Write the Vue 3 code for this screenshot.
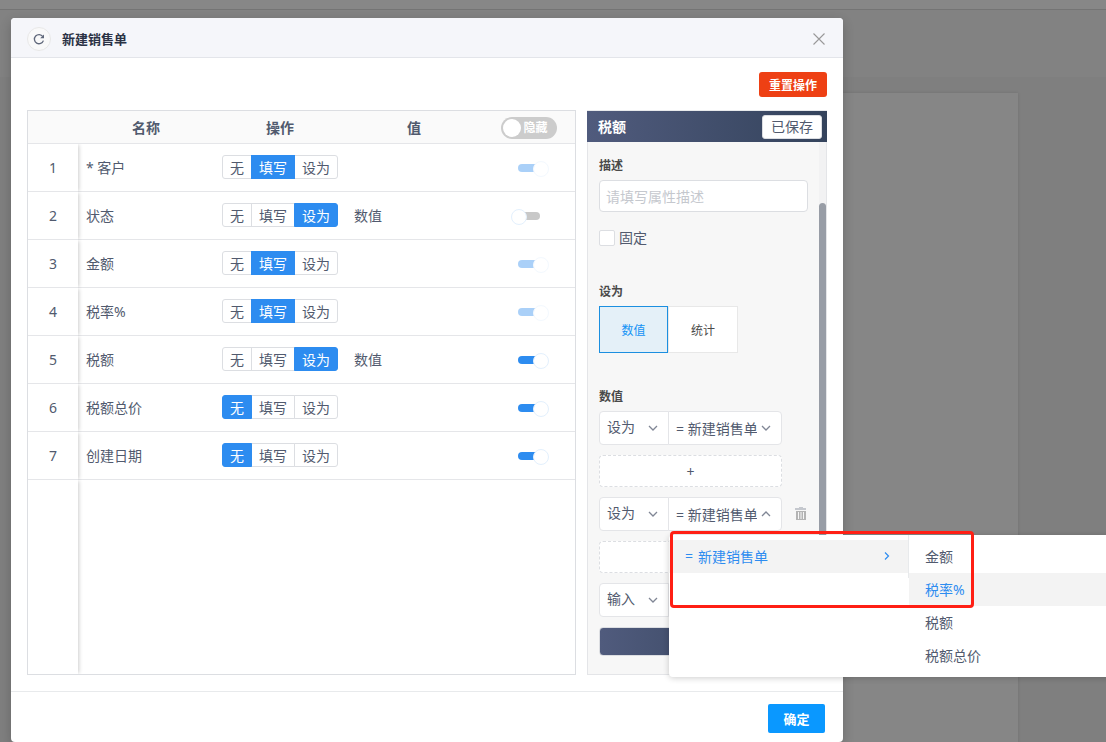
<script setup>
import { ref } from 'vue'

const actions = ['无', '填写', '设为']

const rows = ref([
  { name: '* 客户', action: '填写', value: '', visible: true, locked: true },
  { name: '状态', action: '设为', value: '数值', visible: false, locked: false },
  { name: '金额', action: '填写', value: '', visible: true, locked: true },
  { name: '税率%', action: '填写', value: '', visible: true, locked: true },
  { name: '税额', action: '设为', value: '数值', visible: true, locked: false },
  { name: '税额总价', action: '无', value: '', visible: true, locked: false },
  { name: '创建日期', action: '无', value: '', visible: true, locked: false },
])

const showAll = ref(false)
const description = ref('')
const pinned = ref(false)
const mode = ref('数值')
const menuItems = ['金额', '税率%', '税额', '税额总价']
const activeItem = ref('税率%')
</script>

<template>
  <div class="screen">
    <div class="backdrop" aria-hidden="true">
      <div class="backdrop-bar"></div>
      <div class="backdrop-strip"></div>
      <div class="backdrop-sheet"></div>
    </div>

    <section class="modal" role="dialog" aria-labelledby="modal-title">
      <header class="modal-head">
        <button class="refresh" type="button" aria-label="刷新">
          <svg viewBox="0 0 12 12" width="12" height="12">
            <path d="M10.4 7.6A4.600 4.600 0 1 1 9.800 3.500" fill="none" stroke="#5f677a" stroke-width="1.3" />
            <path d="M11 1.500V5.200H7.200z" fill="#5f677a" />
          </svg>
        </button>
        <h1 id="modal-title">新建销售单</h1>
        <button class="close" type="button" aria-label="关闭">
          <svg viewBox="0 0 12 12" width="12" height="12">
            <path d="M.5 .5l11 11M11.5 .5l-11 11" fill="none" stroke="#999" stroke-width="1.1" />
          </svg>
        </button>
      </header>

      <div class="modal-body">
        <div class="toolbar">
          <button class="reset" type="button">重置操作</button>
        </div>

        <div class="columns">
          <div class="table-box">
            <table>
              <colgroup>
                <col class="c-index" />
                <col class="c-name" />
                <col class="c-action" />
                <col class="c-value" />
                <col class="c-visible" />
              </colgroup>
              <thead>
                <tr>
                  <th class="index"></th>
                  <th>名称</th>
                  <th>操作</th>
                  <th>值</th>
                  <th>
                    <label class="big-switch">
                      <input v-model="showAll" type="checkbox" role="switch" />
                      <span class="big-knob"></span>
                      <span>隐藏</span>
                    </label>
                  </th>
                </tr>
              </thead>
              <tbody>
                <tr v-for="(row, i) in rows" :key="row.name">
                  <td class="index">{{ i + 1 }}</td>
                  <td>{{ row.name }}</td>
                  <td class="action">
                    <div class="group" role="radiogroup" :aria-label="row.name">
                      <label v-for="a in actions" :key="a" :class="{ on: row.action === a }">
                        <input v-model="row.action" type="radio" :name="'action-' + i" :value="a" />{{ a }}
                      </label>
                    </div>
                  </td>
                  <td>{{ row.value }}</td>
                  <td class="visible">
                    <input
                      v-model="row.visible"
                      class="switch"
                      type="checkbox"
                      role="switch"
                      :disabled="row.locked"
                      :aria-label="row.name"
                    />
                  </td>
                </tr>
              </tbody>
            </table>
            <div class="index-tail"></div>
          </div>

          <aside class="panel">
            <div class="panel-head">
              <h2>税额</h2>
              <button type="button">已保存</button>
            </div>
            <div class="panel-body">
              <div class="form">
                <label class="caption" for="description">描述</label>
                <input id="description" v-model="description" class="text" type="text" placeholder="请填写属性描述" />
                <label class="check"><input v-model="pinned" type="checkbox" />固定</label>

                <div class="caption">设为</div>
                <div class="tabs">
                  <button
                    v-for="m in ['数值', '统计']"
                    :key="m"
                    type="button"
                    :class="{ on: mode === m }"
                    @click="mode = m"
                  >{{ m }}</button>
                </div>

                <div class="caption">数值</div>
                <div class="steps">
                  <div class="pair">
                    <div class="pick small">
                      <select aria-label="方式一"><option>设为</option></select>
                      <svg viewBox="0 0 10 10"><path d="M1 3l4 4 4-4" /></svg>
                    </div>
                    <div class="pick">
                      <select aria-label="来源一"><option>= 新建销售单</option></select>
                      <svg viewBox="0 0 10 10"><path d="M1 3l4 4 4-4" /></svg>
                    </div>
                  </div>
                  <button class="add" type="button">+</button>
                  <div class="pair">
                    <div class="pick small">
                      <select aria-label="方式二"><option>设为</option></select>
                      <svg viewBox="0 0 10 10"><path d="M1 3l4 4 4-4" /></svg>
                    </div>
                    <div class="pick">
                      <select aria-label="来源二"><option>= 新建销售单</option></select>
                      <svg viewBox="0 0 10 10"><path d="M1 7l4-4 4 4" /></svg>
                      <div class="cascade">
                        <ul class="cascade-root">
                          <li>
                            <button type="button" class="on">
                              <span>=</span>
                              <span class="source">新建销售单</span>
                              <svg viewBox="0 0 8 8" width="8" height="8"><path d="M2 .5L5.5 4 2 7.500" /></svg>
                            </button>
                          </li>
                        </ul>
                        <ul class="cascade-sub">
                          <li v-for="item in menuItems" :key="item">
                            <button type="button" :class="{ on: item === activeItem }" @click="activeItem = item">{{ item }}</button>
                          </li>
                        </ul>
                        <div class="marker"></div>
                      </div>
                    </div>
                    <button class="trash" type="button" aria-label="删除">
                      <svg viewBox="0 0 12 14" width="12" height="14">
                        <path d="M4 0h4v1h3v2H0V1h4z" fill="#c5c8ce" />
                        <path d="M1 4h10v9H1z" fill="#b4b4b4" />
                        <path d="M3.500 5v7M6 5v7M8.500 5v7" stroke="#f7f7f7" stroke-width="1" />
                      </svg>
                    </button>
                  </div>
                  <button class="add" type="button" aria-label="添加"></button>
                  <div class="pair">
                    <div class="pick small">
                      <select aria-label="方式三"><option>输入</option></select>
                      <svg viewBox="0 0 10 10"><path d="M1 3l4 4 4-4" /></svg>
                    </div>
                    <div class="pick">
                      <select aria-label="来源三"><option></option></select>
                    </div>
                  </div>
                  <button class="apply" type="button" aria-label="保存"></button>
                </div>
              </div>
              <div class="scroll"><div class="thumb"></div></div>
            </div>
          </aside>
        </div>
      </div>

      <footer class="modal-foot">
        <button type="button">确定</button>
      </footer>
    </section>
  </div>
</template>

<style>
body {
  margin: 0;
  background: #7f7f7f;
}
</style>

<style scoped>
* {
  box-sizing: border-box;
}
.screen,
.screen button,
.screen input,
.screen select {
  font-family: "Noto Sans", "Noto Sans CJK SC", sans-serif;
  font-size: 14px;
  color: #515a6e;
}
.screen {
  position: relative;
  display: flex;
  min-height: 100vh;
  padding: 18px 263px 0 11px;
  overflow: hidden;
  line-height: 20px;
}
button {
  margin: 0;
  padding: 0;
  border: 0;
  background: none;
  cursor: pointer;
}
h1,
h2,
ul {
  margin: 0;
  padding: 0;
}
li {
  list-style: none;
}

.backdrop {
  position: absolute;
  inset: 0;
  display: flex;
  flex-direction: column;
  background: #7f7f7f;
}
.backdrop-bar {
  height: 10px;
  background: #878787;
  border-bottom: 1px solid #747474;
}
.backdrop-strip {
  height: 83px;
  background: linear-gradient(#828282 67px, #7f7f7f 67px);
}
.backdrop-sheet {
  flex: 1;
  margin: 0 88px 0 20px;
  background: #868686;
  box-shadow: 0 0 3px rgba(0, 0, 0, 0.12);
}

.modal {
  position: relative;
  flex: 1;
  display: flex;
  flex-direction: column;
  background: #fff;
  border-radius: 4px;
  box-shadow: 0 4px 12px rgba(0, 0, 0, 0.2);
}
.modal-head {
  display: flex;
  align-items: center;
  height: 40px;
  padding: 2px 16px 0;
  background: #f5f6fa;
  border-bottom: 1px solid #e3e5ea;
  border-radius: 4px 4px 0 0;
}
.refresh {
  display: grid;
  place-items: center;
  width: 24px;
  height: 24px;
  background: #f9f9f9;
  border: 1px solid #e8e8e8;
  border-radius: 50%;
}
.modal-head h1 {
  flex: 1;
  margin-left: 11px;
  font-size: 13px;
  color: #2b3245;
}
.close {
  display: grid;
  place-items: center;
  width: 16px;
  height: 16px;
}

.modal-body {
  flex: 1;
  display: flex;
  flex-direction: column;
  padding: 14px 16px 16px;
}
.toolbar {
  display: flex;
  justify-content: flex-end;
  margin-bottom: 13px;
}
.screen .reset {
  height: 25px;
  padding: 0 10px;
  background: #ee4014;
  border-radius: 3px;
  font-size: 12px;
  font-weight: bold;
  color: #fff;
}
.columns {
  flex: 1;
  display: flex;
  gap: 11px;
}

.table-box {
  flex: 1;
  display: flex;
  flex-direction: column;
  border: 1px solid #dcdee2;
}
table {
  width: 100%;
  table-layout: fixed;
  border-collapse: separate;
  border-spacing: 0;
}
.c-index {
  width: 50px;
}
.c-name,
.c-value {
  width: 136px;
}
.c-action {
  width: 132px;
}
.c-visible {
  width: 93px;
}
th {
  height: 33px;
  padding: 2px 0 0;
  background: #fafafa;
  border-bottom: 1px solid #e5e6e9;
}
th.index {
  box-shadow: 1px 0 #fff;
}
td {
  height: 48px;
  padding: 0 8px;
  border-bottom: 1px solid #e5e6e9;
}
td.index {
  text-align: center;
}
td.index,
.index-tail {
  box-shadow: 2px 0 4px -1px rgba(0, 0, 0, 0.2);
  clip-path: inset(0 -8px 0 0);
}
.index-tail {
  flex: 1;
  width: 50px;
}
td.action {
  padding-bottom: 2px;
}
td.visible {
  padding: 0 0 2px;
  text-align: center;
}

.big-switch {
  display: inline-flex;
  align-items: center;
  gap: 3px;
  width: 56px;
  height: 22px;
  padding: 0 2px;
  border-radius: 11px;
  background: #ccc;
  font-size: 12px;
  color: #fff;
  vertical-align: middle;
}
.big-switch input,
.group input {
  position: absolute;
  opacity: 0;
  pointer-events: none;
}
.big-knob {
  width: 18px;
  height: 18px;
  border-radius: 50%;
  background: #fff;
}

.switch {
  appearance: none;
  position: relative;
  display: inline-block;
  width: 22px;
  height: 8px;
  margin: 0;
  border-radius: 4px;
  background: #c8c8c8;
  vertical-align: middle;
}
.switch::after {
  content: "";
  position: absolute;
  top: -3px;
  left: -7px;
  width: 14px;
  height: 14px;
  border: 1px solid #e3f0fd;
  border-radius: 50%;
  background: #fff;
}
.switch:checked {
  background: #2d8cf0;
}
.switch:checked::after {
  left: 15px;
}
.switch:disabled {
  opacity: 0.4;
}

.group {
  display: flex;
  width: max-content;
}
.group label {
  height: 24px;
  margin-left: -1px;
  padding: 0 7px;
  border: 1px solid #dcdee2;
  line-height: 24px;
  background: #fff;
}
.group label:first-child {
  margin-left: 0;
  border-radius: 3px 0 0 3px;
}
.group label:last-child {
  border-radius: 0 3px 3px 0;
}
.group label.on {
  z-index: 1;
  background: #2d8cf0;
  border-color: #2d8cf0;
  color: #fff;
}

.panel {
  width: 240px;
  display: flex;
  flex-direction: column;
  border-top: 1px solid #e8eaec;
}
.panel-head {
  display: flex;
  align-items: center;
  justify-content: space-between;
  height: 31px;
  padding: 0 5px 0 11px;
  background: linear-gradient(90deg, #505b7d, #34435c);
}
.panel-head h2 {
  font-size: 14px;
  color: #fff;
}
.panel-head button {
  width: 60px;
  height: 24px;
  padding-bottom: 2px;
  background: #fff;
  border: 1px solid #dcdee2;
  border-radius: 3px;
}
.panel-body {
  flex: 1;
  display: flex;
  justify-content: space-between;
  background: #f7f7f7;
  border: 1px solid #e4e5e8;
  border-top: 0;
}
.form {
  display: flex;
  flex-direction: column;
  width: 220px;
  padding: 14px 0 18px 11px;
}
.caption {
  height: 24px;
  font-size: 12px;
  font-weight: bold;
  line-height: 20px;
  color: #4a4a4a;
}
.screen .text {
  width: 209px;
  height: 32px;
  padding: 0 6px;
  border: 1px solid #dcdee2;
  border-radius: 4px;
  background: #fff;
}
.text::placeholder {
  color: #c5c8ce;
  opacity: 1;
}
.check {
  display: flex;
  align-items: center;
  gap: 4px;
  height: 20px;
  margin: 16px 0 34px;
}
.check input {
  appearance: none;
  width: 16px;
  height: 16px;
  margin: 0;
  border: 1px solid #dcdee2;
  border-radius: 2px;
  background: #fff;
}
.tabs {
  display: flex;
  margin-bottom: 34px;
}
.screen .tabs button {
  width: 70px;
  height: 47px;
  background: #fff;
  border: 1px solid #e8e8e8;
  font-size: 12px;
  color: #4a4a4a;
}
.screen .tabs button.on {
  width: 69px;
  background: #e4f0f8;
  border-color: #1b8fe0;
  color: #1593f5;
}
.steps {
  display: flex;
  flex-direction: column;
  gap: 10px;
}
.pair {
  display: flex;
  align-items: center;
}
.pick {
  position: relative;
  display: grid;
  align-items: center;
  width: 114px;
  margin-left: -1px;
}
.pick.small {
  width: 70px;
  margin-left: 0;
}
.pick > select,
.pick > svg {
  grid-area: 1 / 1;
}
.pick > svg {
  justify-self: end;
  width: 10px;
  height: 10px;
  margin-right: 11px;
  fill: none;
  stroke: #808695;
  stroke-width: 1.3;
  pointer-events: none;
}
.pick > select {
  appearance: none;
  width: 100%;
  height: 34px;
  padding: 0 24px 0 7px;
  border: 1px solid #e4e5e8;
  border-radius: 0 4px 4px 0;
  background: #fff;
  text-overflow: clip;
}
.pick.small > select {
  padding-bottom: 3px;
  border-radius: 4px 0 0 4px;
}
.add {
  width: 183px;
  height: 32px;
  background: #fff;
  border: 1px dashed #dcdee2;
  border-radius: 4px;
}
.trash {
  display: grid;
  margin-left: 13px;
}
.apply {
  width: 183px;
  height: 29px;
  border: 1px solid #dcdee2;
  border-radius: 4px;
  background: linear-gradient(90deg, #505b7d, #34435c);
}
.scroll {
  width: 7px;
  padding-top: 61px;
  background: #f2f2f3;
}
.thumb {
  height: 340px;
  border-radius: 4px;
  background: #989da6;
}

.cascade {
  position: absolute;
  z-index: 10;
  top: 38px;
  left: 1px;
  display: flex;
  width: 480px;
  background: #fff;
  border-radius: 4px;
  box-shadow: 0 1px 6px rgba(0, 0, 0, 0.2);
}
.cascade ul {
  padding: 5px 0;
}
.cascade-root {
  width: 240px;
  height: 43px;
  border-right: 1px solid #e8eaec;
}
.cascade-sub {
  flex: 1;
}
.cascade button {
  display: flex;
  align-items: center;
  gap: 5px;
  width: 100%;
  height: 33px;
  padding: 0 17px 2px 16px;
}
.cascade button.on {
  background: #f3f3f3;
  color: #2d8cf0;
}
.source {
  flex: 1;
  text-align: left;
}
.cascade button svg {
  fill: none;
  stroke: #2d8cf0;
  stroke-width: 1.2;
}
.marker {
  position: absolute;
  top: -4px;
  left: 1px;
  width: 304px;
  height: 77px;
  border: 3px solid #ff1f14;
  border-radius: 4px;
  pointer-events: none;
}

.modal-foot {
  display: flex;
  justify-content: flex-end;
  padding: 12px 18px 9px;
  border-top: 1px solid #e8eaec;
}
.screen .modal-foot button {
  width: 57px;
  height: 29px;
  background: #0a98ff;
  border-radius: 2px;
  font-size: 13px;
  font-weight: bold;
  color: #fff;
}
</style>
